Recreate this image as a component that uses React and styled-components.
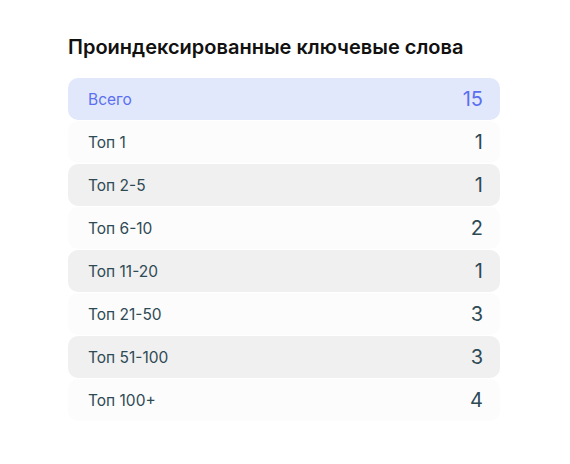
import React from 'react';
import styled, { createGlobalStyle } from 'styled-components';

const GlobalStyle = createGlobalStyle`
  body {
    margin: 0;
    background: #ffffff;
    font-family: Inter, "Noto Sans", sans-serif;
  }
`;

const rows = [
    { label: 'Всего', value: 15, kind: 'total' },
    { label: 'Топ 1', value: 1, kind: 'light' },
    { label: 'Топ 2-5', value: 1, kind: 'gray' },
    { label: 'Топ 6-10', value: 2, kind: 'light' },
    { label: 'Топ 11-20', value: 1, kind: 'gray' },
    { label: 'Топ 21-50', value: 3, kind: 'light' },
    { label: 'Топ 51-100', value: 3, kind: 'gray' },
    { label: 'Топ 100+', value: 4, kind: 'light' },
];

const backgrounds = {
    total: '#e1e8fb',
    light: '#fcfcfc',
    gray: '#f0f0f0',
};

const App = () => {
    return (
        <>
            <GlobalStyle />
            <Card>
                <Title>Проиндексированные ключевые слова</Title>
                <List>
                    {rows.map((row) => (
                        <Row key={row.label} kind={row.kind}>
                            <Label $total={row.kind === 'total'}>{row.label}</Label>
                            <Value $total={row.kind === 'total'}>{row.value}</Value>
                        </Row>
                    ))}
                </List>
            </Card>
        </>
    );
}

const Card = styled.div`
  width: 432px;
  padding: 35px 0 0 68px;
`;

const Title = styled.h2`
  margin: 0 0 19px;
  font-size: 20px;
  line-height: 24px;
  font-weight: 600;
  color: #111111;
`;

const List = styled.div`
  display: flex;
  flex-direction: column;
  gap: 1px;
`;

const Row = styled.div.withConfig({ shouldForwardProp: (p) => p !== 'kind' })`
  display: flex;
  align-items: center;
  justify-content: space-between;
  height: 42px;
  padding: 0 17px 0 20px;
  border-radius: 10px;
  background: ${(p) => backgrounds[p.kind]};
`;

const Label = styled.span`
  font-size: 15.5px;
  color: ${(p) => (p.$total ? '#5b6ff0' : '#2e4a55')};
`;

const Value = styled.span`
  font-size: 20px;
  color: ${(p) => (p.$total ? '#5b6ff0' : '#2e4a55')};
`;

export default App;
